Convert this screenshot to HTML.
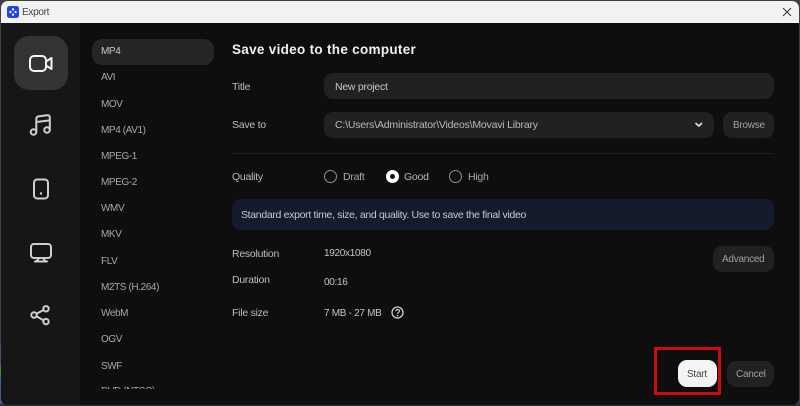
<!DOCTYPE html>
<html><head><meta charset="utf-8">
<style>
html,body{margin:0;padding:0;width:800px;height:406px;overflow:hidden;background:#3a3f4a}
*{box-sizing:border-box}
body{font-family:"Liberation Sans",sans-serif;position:relative}
.a{position:absolute}
.t{position:absolute;font-family:"Liberation Sans",sans-serif;font-size:10.5px;line-height:14px;color:#bdbdbd;white-space:nowrap;letter-spacing:-.25px}
.l{font-size:10px;letter-spacing:-.4px;color:#a8a8a8;left:101px;transform:translateY(1px)}
.v{font-size:10px;letter-spacing:-.3px;color:#c4c4c4;left:324px;transform:translateY(1px)}
.k{font-size:10px;letter-spacing:-.25px;color:#a0a0a0;transform:translateY(1px)}
.b{position:absolute;background:#212121;border-radius:9px}
.r{position:absolute;width:13px;height:13px;border-radius:50%;border:1.5px solid #8f8f8f}
svg{position:absolute;overflow:visible}
</style></head><body>
<div class="a" style="left:0;top:0;width:800px;height:2px;background:#3f3f3f"></div>
<div class="a" style="left:0;top:345px;width:2px;height:61px;background:linear-gradient(#4a4f88 0,#4a4f88 30%,#3c8a3a 35%,#3c8a3a 50%,#4a5a9a 60%,#4a5a9a 100%)"></div>
<div class="a" style="left:0;top:404px;width:800px;height:2px;background:#2c3040"></div>
<div class="a" style="left:1px;top:1px;width:798px;height:404px;background:#0e0e0e;border-radius:7px;overflow:hidden">
  <div class="a" style="left:0;top:0;width:798px;height:22px;background:#f2f2f2"></div>
  <div class="a" style="left:0;top:22px;width:79px;height:382px;background:#161616"></div>
</div>
<div class="a" style="left:7px;top:6px;width:12px;height:12px;background:#1f47e0;border-radius:2.5px"></div>
<svg style="left:7px;top:6px" width="12" height="12"><g fill="#fff"><circle cx="6" cy="3.4" r="1.1"/><circle cx="6" cy="8.6" r="1.1"/><circle cx="3.4" cy="6" r="1.1"/><circle cx="8.6" cy="6" r="1.1"/></g></svg>
<div class="t" style="left:22px;top:6px;color:#444;font-size:10px;letter-spacing:-.3px">Export</div>
<svg style="left:782px;top:7px" width="12" height="12"><path d="M1 1 L9 9 M9 1 L1 9" stroke="#333" stroke-width="1" fill="none"/></svg>

<div class="a" style="left:14px;top:36px;width:54px;height:54px;border-radius:15px;background:#333"></div>
<svg style="left:28px;top:52px" width="26" height="22" fill="none" stroke="#f4f4f4" stroke-width="2" stroke-linejoin="round"><rect x="2" y="4" width="16" height="15" rx="4"/><path d="M18 9.5 L23.5 6 V17 L18 13.5"/></svg>
<svg style="left:29px;top:113px" width="24" height="24" fill="none" stroke="#cfcfcf" stroke-width="2" stroke-linecap="round" stroke-linejoin="round"><circle cx="4.5" cy="19" r="2.8"/><circle cx="18" cy="17" r="2.8"/><path d="M7.3 19 V6 C7.3 4.5 8 3.6 9.5 3.4 L18 2.3 C20 2.1 20.8 3 20.8 4.5 V17 M7.3 9 L20.8 7.4"/></svg>
<svg style="left:32px;top:177px" width="18" height="24" fill="none" stroke="#cfcfcf" stroke-width="2"><rect x="2" y="2.5" width="14" height="19" rx="3.2"/><circle cx="9" cy="16.5" r="1.2" fill="#cfcfcf" stroke="none"/></svg>
<svg style="left:29px;top:241px" width="24" height="24" fill="none" stroke="#cfcfcf" stroke-width="2" stroke-linecap="round" stroke-linejoin="round"><rect x="2" y="3" width="20" height="14" rx="3"/><path d="M9.5 17 C9.5 18.5 8.5 20 6 20.5 H18 C15.5 20 14.5 18.5 14.5 17"/></svg>
<svg style="left:29px;top:304px" width="24" height="24" fill="none" stroke="#cfcfcf" stroke-width="2"><circle cx="5" cy="11" r="2.7"/><circle cx="17" cy="4.8" r="2.7"/><circle cx="17" cy="17.6" r="2.7"/><path d="M7.4 9.8 L14.6 6 M7.4 12.3 L14.6 16.4"/></svg>

<div class="a" style="left:92px;top:39px;width:122px;height:26px;border-radius:10px;background:#252525"></div>
<div class="t l" style="top:44px;color:#c8c8c8">MP4</div>
<div class="t l" style="top:70px">AVI</div>
<div class="t l" style="top:97px">MOV</div>
<div class="t l" style="top:123px">MP4 (AV1)</div>
<div class="t l" style="top:149px">MPEG-1</div>
<div class="t l" style="top:175px">MPEG-2</div>
<div class="t l" style="top:201px">WMV</div>
<div class="t l" style="top:227px">MKV</div>
<div class="t l" style="top:254px">FLV</div>
<div class="t l" style="top:280px">M2TS (H.264)</div>
<div class="t l" style="top:306px">WebM</div>
<div class="t l" style="top:332px">OGV</div>
<div class="t l" style="top:359px">SWF</div>
<div class="a" style="left:101px;top:385px;width:100px;height:4px;overflow:hidden"><div class="t l" style="left:0;top:0;transform:none">DVD (NTSC)</div></div>

<div class="t" style="left:232px;top:41px;font-size:13.5px;line-height:17px;font-weight:bold;color:#f0f0f0;letter-spacing:.3px">Save video to the computer</div>

<div class="t" style="left:232px;top:80px">Title</div>
<div class="b" style="left:324px;top:73px;width:450px;height:26px"></div>
<div class="t" style="left:335px;top:80px;color:#c8c8c8">New project</div>

<div class="t" style="left:232px;top:118px">Save to</div>
<div class="b" style="left:324px;top:112px;width:390px;height:26px"></div>
<div class="t" style="left:335px;top:118px;color:#b8b8b8;letter-spacing:-.2px">C:\Users\Administrator\Videos\Movavi Library</div>
<svg style="left:694px;top:122px" width="10" height="6"><path d="M1.5 1 L4.8 4 L8 1" stroke="#e0e0e0" stroke-width="1.7" fill="none"/></svg>
<div class="b" style="left:723px;top:112px;width:51px;height:26px"></div>
<div class="t k" style="left:733px;top:118px">Browse</div>

<div class="a" style="left:232px;top:153px;width:542px;height:1px;background:#202020"></div>

<div class="t" style="left:232px;top:170px">Quality</div>
<div class="r" style="left:324px;top:170px"></div>
<div class="t" style="left:343px;top:170px;color:#a8a8a8">Draft</div>
<div class="a" style="left:386px;top:170px;width:13px;height:13px;border-radius:50%;background:#fff"></div>
<div class="a" style="left:390px;top:174px;width:5px;height:5px;border-radius:50%;background:#111"></div>
<div class="t" style="left:404px;top:170px;color:#b8b8b8">Good</div>
<div class="r" style="left:449px;top:170px"></div>
<div class="t" style="left:468px;top:170px;color:#a8a8a8">High</div>

<div class="a" style="left:232px;top:199px;width:542px;height:31px;border-radius:9px;background:#141b2d"></div>
<div class="t" style="left:241px;top:208px;color:#c8c8c8;letter-spacing:-.32px">Standard export time, size, and quality. Use to save the final video</div>

<div class="t" style="left:232px;top:247px">Resolution</div>
<div class="t v" style="top:246px">1920x1080</div>
<div class="t" style="left:232px;top:273px">Duration</div>
<div class="t v" style="top:275px">00:16</div>
<div class="t" style="left:232px;top:306px">File size</div>
<div class="t v" style="top:306px">7 MB - 27 MB</div>
<svg style="left:391px;top:306px" width="13" height="13" fill="none"><circle cx="6.5" cy="6.5" r="5.5" stroke="#ccc" stroke-width="1.3"/><path d="M4.6 5.2 C4.6 2.9 8.4 2.9 8.4 5.2 C8.4 6.5 6.5 6.4 6.5 7.8" stroke="#ccc" stroke-width="1.2"/><circle cx="6.5" cy="9.6" r=".8" fill="#ccc"/></svg>

<div class="b" style="left:713px;top:246px;width:61px;height:26px"></div>
<div class="t k" style="left:722px;top:252px">Advanced</div>

<div class="a" style="left:654px;top:347px;width:67px;height:48px;border:3px solid #cc0c0c"></div>
<div class="a" style="left:678px;top:360px;width:39px;height:27px;border-radius:9px;background:#f4f4f4"></div>
<div class="t k" style="left:687px;top:367px;color:#444">Start</div>
<div class="b" style="left:727px;top:361px;width:47px;height:26px"></div>
<div class="t k" style="left:736px;top:367px">Cancel</div>
</body></html>
